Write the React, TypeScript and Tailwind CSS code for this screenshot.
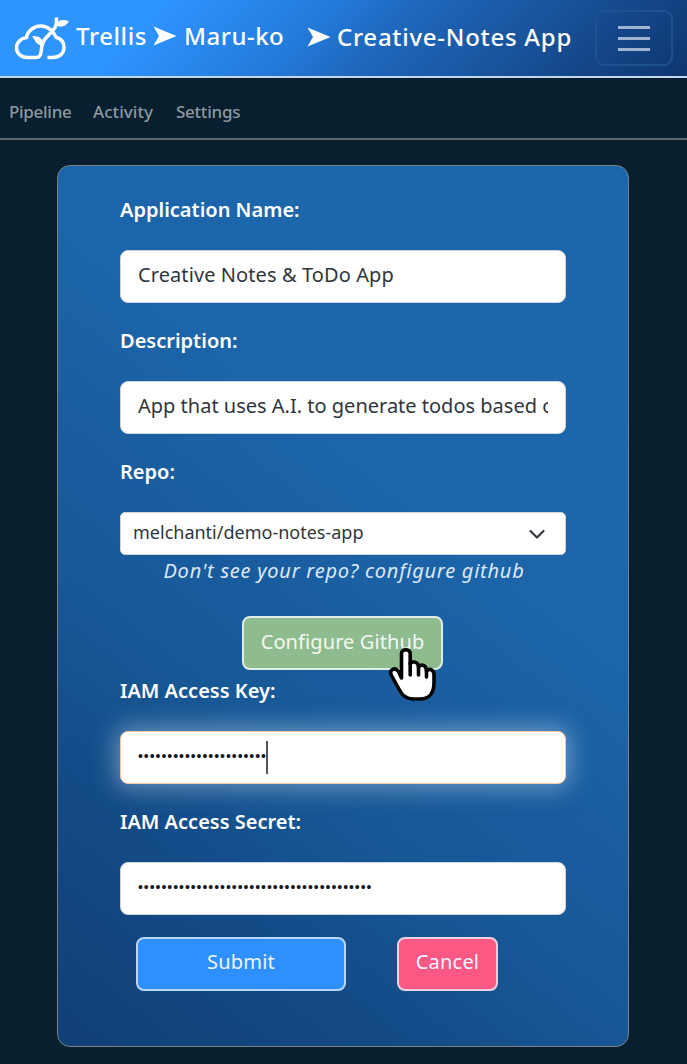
import React from "react";

function CloudLogo() {
  return (
    <svg className="h-[46px] w-[56px] shrink-0" viewBox="0 0 56 46" fill="none" stroke="#fff" strokeWidth="3.5">
      <path d="M33.500 42.500H39C46 42.500 50 38 50 32.500C50 27 46.500 23.500 42 22.200C40.500 19 38 15.500 35.500 14C31 10 23 10 18.500 13.500C15 16 13 19 12.500 22.500C6 23.500 2.500 28 2.500 32.500C2.500 38 6.500 42.500 13 42.500H22C25 42.500 26.500 40.500 27 37.500C27.600 33 27.500 28 31 24C34 20.500 38.500 16.500 41 12.500C42.500 10 42.800 6 42.300 2.500" />
      <path d="M18 21C25 20.500 29.500 23.500 29 30.500C22.500 30.500 21.500 26 18 21Z" fill="#fff" stroke="none" />
      <path d="M42 10C44.500 4.500 49 4 55 6.500C51 12 46.500 13 42 10Z" fill="#fff" stroke="none" />
    </svg>
  );
}

function Arrow({ className }: { className: string }) {
  return (
    <svg className={"h-[20px] w-[24px] shrink-0 " + className} viewBox="0 0 24 20" fill="#fff">
      <path d="M0.500 0.500L23.500 10L0.500 19.500L6 10Z" />
    </svg>
  );
}

function Header() {
  return (
    <header className="flex h-[78px] shrink-0 items-start border-b-2 border-[#c3d6ee] bg-[linear-gradient(135deg,#2e94ff_0%,#2e94ff_22%,#2379d8_45%,#1f68bd_55%,#164c90_80%,#0e3670_100%)] pl-[14px] font-medium text-white">
      <div className="mt-[15px] flex">
        <CloudLogo />
      </div>
      <span className="ml-[6px] mt-[20px] w-[71px] whitespace-nowrap text-[24px] leading-8 tracking-[0.600px]">Trellis</span>
      <Arrow className="ml-[6px] mt-[26px]" />
      <span className="ml-[7px] mt-[20px] w-[101px] whitespace-nowrap text-[24px] leading-8 tracking-[0.500px]">Maru-ko</span>
      <Arrow className="ml-[22px] mt-[27px]" />
      <span className="ml-[6px] mt-[21px] w-[235px] whitespace-nowrap text-[24px] leading-8 tracking-[0.730px]">Creative-Notes App</span>
      <button className="ml-[23px] mt-[10px] flex h-[56px] w-[78px] flex-col items-center justify-center gap-[8px] rounded-[9px] border-2 border-[#1d5190]">
        <span className="h-[3px] w-[32px] bg-[#9fb4d3]" />
        <span className="h-[3px] w-[32px] bg-[#9fb4d3]" />
        <span className="h-[3px] w-[32px] bg-[#9fb4d3]" />
      </button>
    </header>
  );
}

function Tabs() {
  return (
    <nav className="flex h-[62px] shrink-0 items-start border-b-2 border-[#5c666b] pl-[9px] pt-[22px] text-[17px] font-medium leading-6 text-[#8e989e]">
      <a className="w-[84px] whitespace-nowrap tracking-[-0.300px]">Pipeline</a>
      <a className="w-[83px] whitespace-nowrap tracking-[0.050px]">Activity</a>
      <a className="whitespace-nowrap tracking-[-0.250px]">Settings</a>
    </nav>
  );
}

function Label({ children }: { children: React.ReactNode }) {
  return <label className="block h-[28px] whitespace-nowrap text-[20px] font-semibold leading-7 text-white">{children}</label>;
}

const field = "flex h-[53px] w-[446px] items-center overflow-hidden rounded-[8px] border border-[#ced4da] bg-white text-[#30363c]";

function Dots({ count }: { count: number }) {
  return (
    <span className="-mt-[4px] whitespace-nowrap font-['Liberation_Sans',sans-serif] text-[14px] leading-5 tracking-[0.960px] text-[#15181b]">
      {"•".repeat(count)}
    </span>
  );
}

function HandCursor() {
  return (
    <svg className="absolute left-[145px] top-[30px] h-[56px] w-[50px]" viewBox="0 0 50 56" fill="#fff" stroke="#000" strokeWidth="3.600" strokeLinejoin="round" strokeLinecap="round">
      <path d="M14.500 27V7.500C14.500 2.500 23.200 2.500 23.200 7.500V18C25 14.500 31.500 15.500 31.500 21C34 17.500 39.500 19 39.500 25C43 21.500 47 24 47 29V36.500C47 47 42 53 33.500 53H26C19.500 53 15 49 12.500 44L4.500 29.500C1.500 23.500 8 20.500 11.500 25.500L14.500 32Z" />
      <path d="M23.200 17V29M31.500 21V29M39.500 24V31" fill="none" />
    </svg>
  );
}

export default function App() {
  return (
    <div className="flex h-[1064px] w-[687px] flex-col overflow-hidden bg-[#071f2e] font-['Noto_Sans',sans-serif]">
      <Header />
      <Tabs />
      <main className="ml-[57px] mt-[25px] flex h-[882px] w-[572px] shrink-0 flex-col rounded-[13px] border border-[#7d8287] bg-[linear-gradient(38deg,#113f76_0%,#134a86_20%,#175795_34%,#195c9e_46%,#1c65aa_62%,#1c67ac_100%)] pl-[62px] pt-[30px]">
        <Label>Application Name:</Label>
        <div className={field + " mt-[26px] px-[17px] pb-[3px]"}>
          <span className="whitespace-nowrap text-[20px] tracking-[0.090px]">Creative Notes &amp; ToDo App</span>
        </div>
        <div className="mt-[24px]"><Label>Description:</Label></div>
        <div className={field + " mt-[26px] px-[17px] pb-[3px]"}>
          <span className="w-full overflow-hidden whitespace-nowrap text-[20px]">App that uses A.I. to generate todos based on</span>
        </div>
        <div className="mt-[24px]"><Label>Repo:</Label></div>
        <div className={field + " mt-[26px] h-[43px]! justify-between rounded-[5px]! pl-[12px] pr-[20px]"}>
          <span className="-mt-[2px] whitespace-nowrap text-[18px]">melchanti/demo-notes-app</span>
          <svg className="h-[16px] w-[16px]" viewBox="0 0 16 16" fill="none" stroke="#343a40" strokeWidth="2.200" strokeLinecap="round" strokeLinejoin="round">
            <path d="M1.500 5L8 11.500L14.500 5" />
          </svg>
        </div>
        <p className="mt-[2px] w-[448px] whitespace-nowrap text-center text-[20px] italic leading-7 tracking-[0.750px] text-[#dce8f4]">Don't see your repo? configure github</p>
        <div className="relative ml-[122px] mt-[31px] h-[54px] w-[201px]">
          <button className="h-[54px] w-[201px] whitespace-nowrap rounded-[8px] border-2 border-[#dfeee2] bg-[#8fbc8f] pb-[3px] text-[20px] tracking-[0.100px] text-[#f3f8f3]">Configure Github</button>
          <HandCursor />
        </div>
        <div className="mt-[7px]"><Label>IAM Access Key:</Label></div>
        <div className={field + " mt-[26px] border-[#f2c9a0]! pl-[17px] shadow-[0_0_24px_4px_rgba(190,215,235,0.500)]"}>
          <Dots count={22} />
          <span className="-ml-px h-[33px] w-[2px] bg-[#50565c]" />
        </div>
        <div className="mt-[24px]"><Label>IAM Access Secret:</Label></div>
        <div className={field + " mt-[26px] pl-[17px]"}>
          <Dots count={40} />
        </div>
        <div className="ml-[16px] mt-[22px] flex gap-[51px] text-[20px] text-[#eef5ff]">
          <button className="h-[54px] w-[210px] rounded-[8px] border-2 border-[#b9d6f6] bg-[#2e90ff] pb-[4px] tracking-[0.200px]">Submit</button>
          <button className="h-[54px] w-[101px] rounded-[8px] border-2 border-[#efd0e0] bg-[#fb5884] pb-[4px] tracking-[0.200px]">Cancel</button>
        </div>
      </main>
    </div>
  );
}
